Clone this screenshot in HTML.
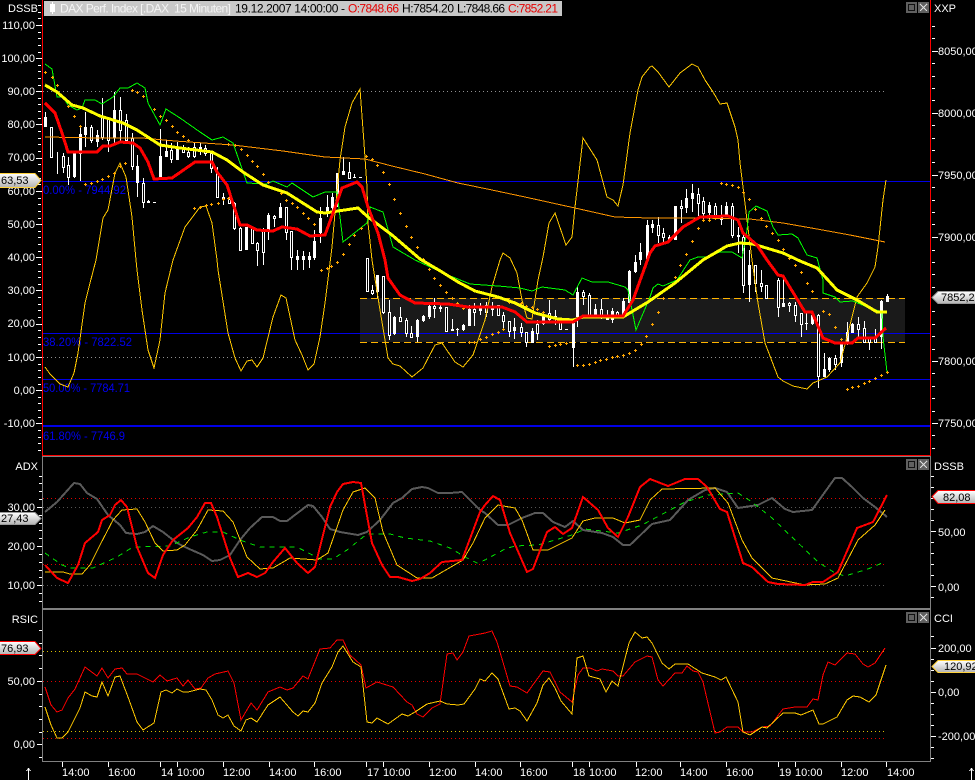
<!DOCTYPE html>
<html><head><meta charset="utf-8"><title>DAX chart</title>
<style>
html,body{margin:0;padding:0;background:#000;overflow:hidden}
svg{display:block}
text{font-family:"Liberation Sans",sans-serif;font-size:11px;fill:#fff}
.n{fill:none}
.t{stroke-linejoin:miter}
</style></head><body>
<svg width="975" height="780" viewBox="0 0 975 780" xmlns="http://www.w3.org/2000/svg">
<defs>
<marker id="d" markerWidth="5" markerHeight="5" refX="2" refY="2" markerUnits="userSpaceOnUse"><path d="M1 2.500h3M2.500 1v3" stroke="#ffa500" stroke-width="1" shape-rendering="crispEdges"/></marker>
<linearGradient id="g" x1="0" y1="0" x2="0" y2="1"><stop offset="0" stop-color="#fff"/><stop offset="1" stop-color="#b4b4b4"/></linearGradient>
</defs>
<rect width="975" height="780" fill="#000"/>

<g shape-rendering="crispEdges">
<!-- box -->
<rect x="360" y="298" width="545" height="44" fill="#1a1a1a"/>
<path d="M360 298.500H905M360 342.500H905" stroke="#ffb400" stroke-dasharray="7 4" fill="none"/>
<!-- dotted -->
<path d="M43 91.500H887M43 357.500H887" stroke="#909090" stroke-dasharray="1 3" fill="none"/>
<!-- blue -->
<path d="M43 181.500H930M43 333.500H930M43 379.500H930" stroke="#0000e6" fill="none"/>
<rect x="43" y="425" width="887" height="2" fill="#0000e6"/>
</g>
<g>
<text x="43" y="194" textLength="83" lengthAdjust="spacingAndGlyphs" style="fill:#0000f0;font-size:12px">0.00% - 7944.92</text>
<text x="43" y="346" textLength="89" lengthAdjust="spacingAndGlyphs" style="fill:#0000f0;font-size:12px">38.20% - 7822.52</text>
<text x="43" y="392" textLength="87" lengthAdjust="spacingAndGlyphs" style="fill:#0000f0;font-size:12px">50.00% - 7784.71</text>
<text x="43" y="440" textLength="82" lengthAdjust="spacingAndGlyphs" style="fill:#0000f0;font-size:12px">61.80% - 7746.9</text>
</g>

<g shape-rendering="crispEdges" fill="none">
<!-- wicks -->
<path transform="translate(.5 0)" stroke="#fff" d="M45 112V127M51 127V157M57 152V174M63 153V173M68 157V185M74 153V178M80 125V181M85 112V147M91 125V143M97 130V147M102 98V140M108 117V152M114 92V143M120 97V143M126 114V142M132 133V170M137 155V197M143 178V208M148 200V203M160 129V177M166 140V157M171 143V163M177 142V160M183 145V153M188 147V158M194 143V158M200 143V155M205 145V156M211 153V173M217 167V198M223 193V205M229 193V203M234 202V230M240 227V250M246 227V250M252 227V243M257 242V266M263 228V265M268 213V240M274 215V227M280 203V218M286 207V240M291 231V270M297 250V270M303 251V270M309 252V268M314 230V260M320 207V243M327 195V217M332 193V217M337 173V207M343 157V175M349 162V178M354 174V178M372 285V295M377 275V298M383 276V314M389 300V340M394 316V335M400 307V322M406 318V337M411 326V338M417 319V342M423 315V322M429 305V319M434 298V318M440 305V312M446 307V331M452 319V331M457 328V336M463 324V331M469 305V326M474 303V326M480 303V315M486 302V317M492 302V316M498 305V316M503 312V328M509 321V337M514 318V339M521 323V337M526 332V347M532 328V343M537 320V340M543 312V325M549 300V322M555 310V325M560 320V330M573 319V367M577 287V327M583 290V305M589 293V318M595 304V318M601 299V319M607 310V320M612 308V323M617 311V318M623 298V317M629 270V303M635 255V273M640 243V265M647 220V262M652 220V233M658 217V243M663 228V243M669 235V242M675 206V240M681 200V223M686 189V213M692 184V212M698 188V216M703 197V222M709 202V220M715 203V220M721 205V225M726 202V217M732 203V238M738 227V253M743 235V293M749 250V302M755 265V292M761 270V292M766 285V298M778 278V317M783 278V307M789 302V312M795 302V322M801 313V337M806 313V330M812 315V325M818 314V388M824 353V377M829 357V372M835 355V370M841 342V367M847 322V345M852 323V333M858 317V338M864 321V342M869 337V350M875 329V343M881 300V349M887 294V302"/>
<!-- hollow bodies -->
<path transform="translate(.5 .5)" stroke="#fff" fill="#000" d="M50 127h2v30h-2zM62 156h2v11h-2zM67 165h2v12h-2zM90 127h2v13h-2zM101 117h2v20h-2zM107 118h2v22h-2zM119 110h2v20h-2zM125 120h2v20h-2zM131 138h2v28h-2zM142 183h2v19h-2zM170 150h2v9h-2zM182 147h2v5h-2zM187 152h2v4h-2zM193 147h2v9h-2zM204 148h2v5h-2zM210 153h2v15h-2zM216 172h2v25h-2zM222 197h2v2h-2zM228 199h2v4h-2zM233 203h2v25h-2zM239 228h2v22h-2zM251 228h2v15h-2zM256 243h2v7h-2zM262 230h2v22h-2zM273 216h2v2h-2zM285 207h2v25h-2zM290 231h2v26h-2zM348 172h2v6h-2zM366 258h2v33h-2zM371 290h2v3h-2zM382 276h2v36h-2zM388 312h2v23h-2zM399 317h2v4h-2zM405 320h2v13h-2zM410 333h2v4h-2zM433 306h2v2h-2zM445 307h2v24h-2zM473 309h2v3h-2zM485 305h2v7h-2zM497 305h2v10h-2zM502 315h2v6h-2zM508 321h2v10h-2zM520 327h2v5h-2zM525 332h2v10h-2zM536 324h2v9h-2zM548 313h2v6h-2zM559 320h2v9h-2zM582 292h2v4h-2zM588 295h2v21h-2zM600 309h2v8h-2zM616 312h2v5h-2zM657 225h2v10h-2zM662 233h2v4h-2zM680 206h2v2h-2zM697 194h2v9h-2zM702 201h2v12h-2zM714 206h2v11h-2zM731 206h2v29h-2zM742 237h2v48h-2zM754 265h2v18h-2zM760 283h2v3h-2zM765 285h2v13h-2zM777 280h2v27h-2zM788 303h2v2h-2zM794 305h2v10h-2zM800 313h2v11h-2zM817 315h2v61h-2zM834 358h2v6h-2zM857 324h2v5h-2zM863 328h2v14h-2zM868 338h2v4h-2zM874 338h2v4h-2z"/>
<!-- filled bodies -->
<path fill="#fff" d="M44 117h3v10h-3zM73 153h3v24h-3zM79 134h3v20h-3zM84 127h3v8h-3zM96 135h3v7h-3zM113 110h3v28h-3zM136 166h3v17h-3zM147 201h3v2h-3zM153 202h3v1h-3zM159 156h3v21h-3zM165 151h3v6h-3zM176 147h3v13h-3zM199 147h3v2h-3zM245 227h3v23h-3zM267 215h3v15h-3zM279 207h3v11h-3zM296 256h3v4h-3zM302 256h3v4h-3zM308 256h3v4h-3zM313 241h3v17h-3zM319 218h3v15h-3zM326 207h3v6h-3zM331 197h3v11h-3zM336 173h3v27h-3zM342 171h3v4h-3zM353 177h3v1h-3zM359 177h3v1h-3zM376 275h3v17h-3zM393 317h3v17h-3zM416 320h3v17h-3zM422 316h3v5h-3zM428 306h3v11h-3zM439 307h3v2h-3zM451 329h3v2h-3zM456 329h3v1h-3zM462 325h3v5h-3zM468 309h3v17h-3zM479 307h3v4h-3zM491 306h3v4h-3zM513 327h3v4h-3zM531 331h3v12h-3zM542 315h3v9h-3zM554 316h3v2h-3zM565 329h3v1h-3zM572 323h3v25h-3zM576 292h3v25h-3zM594 309h3v7h-3zM606 318h3v2h-3zM611 311h3v9h-3zM622 301h3v15h-3zM628 271h3v32h-3zM634 262h3v10h-3zM639 252h3v8h-3zM646 225h3v35h-3zM651 224h3v4h-3zM668 237h3v3h-3zM674 206h3v34h-3zM685 198h3v10h-3zM691 193h3v6h-3zM708 205h3v8h-3zM720 215h3v5h-3zM725 206h3v9h-3zM737 235h3v2h-3zM748 265h3v20h-3zM782 303h3v4h-3zM805 323h3v1h-3zM811 315h3v9h-3zM823 369h3v8h-3zM828 358h3v12h-3zM840 343h3v20h-3zM846 332h3v10h-3zM851 324h3v9h-3zM880 301h3v36h-3zM886 296h3v6h-3z"/>

<!-- thin yellow -->
<polyline stroke="#ffc800" points="45,367 50,374 60,384 68,387 74,373 78,353 85,303 90,283 96,260 103,218 108,210 115,173 120,163 126,177 132,217 136,260 137,270 142,310 148,350 154,368 160,340 165,293 173,260 185,227 200,207 206,206 212,223 217,260 218,270 228,333 235,358 241,371 247,361 252,360 257,367 263,358 273,317 281,295 286,298 295,340 302,355 308,370 314,364 320,337 325,303 332,247 335,213 340,160 345,127 352,103 360,89 364,143 367,187 368,223 372,260 380,310 388,358 393,364 400,366 412,377 423,368 435,345 442,343 455,362 463,367 473,355 485,320 492,287 500,260 503,253 510,258 517,273 522,300 527,318 532,319 538,280 543,257 549,223 555,213 566,245 572,237 575,207 583,138 597,160 607,197 613,200 618,206 623,185 630,133 638,90 642,77 650,67 652,66 658,72 669,87 680,73 692,64 698,67 705,80 713,92 720,104 727,103 735,127 738,140 740,163 743,187 747,220 752,260 758,303 765,343 778,377 783,381 793,386 807,389 813,383 827,377 840,363 847,337 857,297 867,283 875,267 878,247 883,200 886,180"/>
<!-- long orange -->
<polyline stroke="#ff9600" points="45,137 100,138 142,138 175,141 233,145 283,151 325,157 365,159 392,166 425,174 458,183 492,190 525,197 575,208 615,217 650,218 700,218 750,219 783,223 817,229 850,235 885,242"/>
<!-- green -->
<polyline stroke="#00ff00" points="45,64 52,69 57,97 63,97 68,105 77,110 82,108 85,100 95,100 102,104 113,97 120,88 128,88 137,83 145,88 148,103 160,125 166,109 180,118 200,132 212,140 223,137 233,143 247,183 267,184 273,181 287,187 292,183 313,197 325,192 337,192 343,242 367,223 370,207 383,212 393,247 415,260 448,275 470,284 498,286 520,288 532,291 542,287 565,290 573,295 582,278 592,282 608,282 625,287 628,290 636,330 650,297 653,288 658,284 663,286 677,280 690,260 698,257 707,257 720,252 732,252 742,258 747,230 749,212 756,206 767,211 773,227 778,235 792,234 798,238 807,255 817,258 823,280 823,293 835,297 840,302 853,301 867,307 882,312 883,337 887,372"/>
</g>
<!-- plus dots -->
<g fill="none" stroke="none" marker-start="url(#d)" marker-mid="url(#d)" marker-end="url(#d)">
<polyline points="45,72 52,77 57,85 68,106 74,116 80,126"/>
<polyline points="85,184 91,183 97,181 102,179 108,176 114,173 120,166 125,163"/>
<polyline points="132,90 137,92 143,96 154,109 160,116 166,120 172,126 177,132 183,136 188,140"/>
<polyline points="194,208 200,207 206,205 211,204 218,203 223,199 228,198"/>
<polyline points="228,144 235,145 241,149 247,155 252,161 257,166 263,174 268,182 281,193 286,200 292,203 297,207 303,213 308,218 314,224 321,270 327,268 331,266 337,262 343,254 349,244 354,235 361,228"/>
<polyline points="366,156 372,159 377,165 383,172 389,184 394,199 400,213 406,226 411,237 417,247 423,259 429,269 434,278 440,285 446,292 452,298 457,303 463,308"/>
<polyline points="469,342 474,342 480,339 486,337 492,334 498,332 503,329"/>
<polyline points="509,302 514,302 521,303 526,306 532,307 537,309 543,312"/>
<polyline points="549,346 555,345 560,344 566,343"/>
<polyline points="577,365 583,365 589,364 595,362 600,360 606,359 612,357 617,356 623,355 629,353 635,350 641,344 646,336 652,324 658,312 663,298 675,277 680,265 686,254 692,241 698,228 703,220 709,220 715,218"/>
<polyline points="721,183 726,184 732,185 738,187 743,192 749,199 755,209 761,218 766,226 772,233 778,240 783,249 789,258 795,265 801,272 807,283 812,291 823,311 829,314 835,327 841,339"/>
<polyline points="847,389 852,387 858,386 864,383 869,381 875,378 881,375 887,372"/>
</g>
<g shape-rendering="crispEdges" fill="none">
<!-- thick yellow -->
<polyline stroke="#ffff00" stroke-width="3" points="45,85 57,92 72,105 83,108 100,116 123,123 137,130 160,145 180,148 212,152 227,160 243,172 263,185 287,193 317,212 325,213 358,208 368,217 392,235 420,259 442,272 458,282 475,291 498,297 515,303 535,313 558,319 573,320 583,317 623,317 648,302 675,283 703,260 727,246 740,243 753,244 783,253 800,261 817,268 837,290 857,300 877,312 887,312"/>
<!-- thick red -->
<polyline stroke="#ff0000" stroke-width="3" points="45,103 55,113 62,133 68,152 97,152 103,146 110,146 120,142 133,143 140,148 148,162 154,179 172,178 195,162 212,162 217,172 227,185 240,225 247,225 257,230 273,231 282,227 297,229 310,236 325,235 333,213 342,188 357,182 362,187 368,207 378,233 385,260 388,278 400,295 415,303 448,304 468,307 502,307 515,312 527,322 573,322 583,316 623,316 633,300 650,253 655,246 668,242 683,227 700,217 728,216 738,220 743,233 757,245 767,260 778,275 783,276 805,312 812,312 823,338 835,343 852,343 858,338 875,338 886,328"/>

<!-- Pane 2 -->
<path d="M43 498.500H887M43 564.500H887" stroke="#e00000" stroke-dasharray="1 3"/>
<path d="M43 507.500H887M43 585.500H887" stroke="#555" stroke-dasharray="1 3"/>
<polyline stroke="#5a5a5a" stroke-width="2" points="45,512 57,502 74,483 80,484 87,493 97,499 108,515 120,525 126,533 137,534 145,532 153,526 163,532 177,543 187,548 203,555 212,561 220,560 230,555 240,540 250,528 262,517 273,517 280,521 287,521 308,505 313,506 322,517 330,529 340,532 358,535 367,532 380,520 393,503 402,498 412,489 422,487 428,488 438,493 450,493 462,492 480,510 485,513 498,525 508,525 522,518 535,513 543,513 553,522 565,527 573,521 583,530 602,533 613,537 623,545 630,545 652,524 670,520 688,500 705,490 715,488 727,492 738,508 758,505 772,498 785,509 793,512 812,510 835,478 842,478 852,487 863,498 875,507 887,517"/>
<polyline stroke="#00e000" stroke-dasharray="5 5" points="45,553 62,565 70,568 93,568 117,557 133,547 170,546 190,537 207,532 223,532 240,540 260,547 297,547 320,559 333,559 347,550 367,534 390,534 405,538 430,541 450,548 467,558 477,563 485,560 505,549 515,546 538,545 572,535 585,529 618,533 642,525 685,502 708,495 738,493 752,502 772,518 818,562 835,573 845,576 868,569 882,563"/>
<polyline stroke="#ffc800" points="45,572 63,572 70,574 82,574 90,565 100,545 113,520 122,510 137,509 145,522 155,543 163,551 177,550 185,545 197,530 208,510 223,511 233,522 247,557 260,569 273,568 290,558 317,560 328,553 343,510 353,492 365,488 375,498 383,532 397,565 417,578 432,578 463,560 473,543 485,518 498,505 515,508 522,520 533,550 548,550 572,538 583,521 595,518 613,518 625,523 640,520 650,500 662,489 715,488 728,503 742,540 752,558 772,578 805,585 825,584 838,578 858,540 875,525 885,510"/>
<polyline stroke="#ff0000" stroke-width="2" points="45,565 57,578 68,583 78,565 85,543 98,532 102,520 110,515 115,505 121,500 127,507 137,547 148,573 155,578 163,555 173,540 188,528 197,517 205,503 211,503 217,517 230,558 238,577 248,573 257,577 265,573 273,562 285,548 297,563 308,573 315,567 330,507 337,492 343,484 353,482 361,483 372,543 382,565 390,577 398,577 412,581 420,579 430,573 442,562 462,560 480,512 485,505 493,496 500,500 510,533 527,572 533,569 547,532 555,527 563,534 572,528 583,497 598,510 608,528 618,537 628,517 640,487 650,479 668,486 685,479 698,479 707,487 720,509 727,512 743,563 752,567 768,582 778,584 805,585 813,582 823,582 838,572 857,528 873,522 887,495"/>

<!-- Pane 3 -->
<path d="M43 651.500H887M43 731.500H887" stroke="#d8c000" stroke-dasharray="1 3"/>
<path d="M43 681.500H887M43 738.500H887" stroke="#e00000" stroke-dasharray="1 3"/>
<polyline stroke="#ff0000" points="45,687 51,705 57,712 62,710 68,698 75,689 85,667 97,676 102,668 108,678 115,669 122,668 127,674 137,674 153,682 160,675 167,681 177,678 183,686 188,680 195,689 201,688 208,678 215,674 228,671 234,683 241,720 251,703 257,710 268,692 280,687 287,690 293,688 303,676 308,679 320,649 330,648 337,640 343,640 350,655 361,665 366,688 377,682 393,687 407,702 412,705 417,714 423,717 432,708 440,704 447,654 453,653 457,660 463,652 469,636 480,634 485,633 492,631 497,642 510,686 517,687 527,693 543,671 550,672 560,692 572,702 578,675 583,668 590,668 597,671 602,669 613,671 618,676 623,676 635,662 647,656 652,657 658,680 663,686 675,673 682,673 687,666 693,671 698,672 703,682 715,733 720,732 727,727 738,727 743,732 752,732 762,727 770,726 783,709 795,707 807,707 813,699 818,700 823,675 828,662 835,665 847,653 855,654 863,664 868,667 875,663 885,648"/>
<polyline stroke="#ffc800" points="45,707 51,725 57,738 62,738 68,732 80,708 85,692 92,696 97,697 102,682 108,696 115,677 120,676 128,697 137,722 143,730 154,723 161,692 166,690 172,693 177,689 183,692 188,692 200,689 206,690 212,700 218,715 223,718 228,715 234,726 241,731 246,720 251,718 257,722 268,705 280,697 293,712 298,716 303,711 308,712 315,703 322,683 332,667 338,652 343,646 353,662 361,667 367,722 372,723 377,718 388,724 402,714 408,716 415,712 427,704 440,701 447,704 458,705 464,704 475,689 480,679 485,681 492,673 498,679 509,709 515,708 520,711 527,721 537,703 543,685 549,678 555,688 561,701 572,714 577,658 583,656 589,676 600,679 606,692 612,681 618,686 629,643 635,632 642,638 647,637 652,643 662,663 669,669 675,664 688,664 702,673 715,677 721,680 726,677 738,702 743,732 750,735 762,727 767,728 783,713 795,713 801,715 813,710 819,724 823,724 837,717 847,700 853,696 860,697 869,702 876,695 886,665"/>

<!-- frame -->
<rect x="42" y="456" width="889" height="1" fill="#808080" stroke="none"/>
<rect x="42" y="608" width="889" height="2" fill="#808080" stroke="none"/>
<rect x="42" y="761" width="889" height="1" fill="#808080" stroke="none"/>
<rect x="42" y="456" width="1" height="306" fill="#808080" stroke="none"/>
<rect x="930" y="456" width="1" height="306" fill="#808080" stroke="none"/>
<rect x="42" y="0" width="1" height="456" fill="#ff0000" stroke="none"/>
<rect x="930" y="0" width="1" height="456" fill="#ff0000" stroke="none"/>
<rect x="42" y="455" width="889" height="1" fill="#ff0000" stroke="none"/>

<!-- ticks -->
<path stroke="#fff" d="M36 25.500h6M36 58.500h6M36 91.500h6M36 124.500h6M36 158.500h6M36 191.500h6M36 224.500h6M36 257.500h6M36 290.500h6M36 324.500h6M36 357.500h6M36 390.500h6M36 423.500h6
M38 5.500h3M38 12.500h3M38 18.500h3M38 32.500h3M38 38.500h3M38 45.500h3M38 52.500h3M38 65.500h3M38 71.500h3M38 78.500h3M38 85.500h3M38 98.500h3M38 104.500h3M38 111.500h3M38 118.500h3M38 131.500h3M38 138.500h3M38 144.500h3M38 151.500h3M38 164.500h3M38 171.500h3M38 178.500h3M38 184.500h3M38 198.500h3M38 204.500h3M38 211.500h3M38 218.500h3M38 231.500h3M38 237.500h3M38 244.500h3M38 251.500h3M38 264.500h3M38 271.500h3M38 277.500h3M38 284.500h3M38 297.500h3M38 304.500h3M38 310.500h3M38 317.500h3M38 330.500h3M38 337.500h3M38 344.500h3M38 350.500h3M38 364.500h3M38 370.500h3M38 377.500h3M38 384.500h3M38 397.500h3M38 403.500h3M38 410.500h3M38 417.500h3M38 430.500h3M38 437.500h3M38 443.500h3M38 450.500h3
M37 507.500h5M37 546.500h5M37 585.500h5M39 476.500h3M39 483.500h3M39 491.500h3M39 499.500h3M39 515.500h3M39 523.500h3M39 530.500h3M39 538.500h3M39 554.500h3M39 562.500h3M39 570.500h3M39 577.500h3M39 593.500h3M39 601.500h3
M37 681.500h5M37 744.500h5M39 630.500h3M39 643.500h3M39 655.500h3M39 668.500h3M39 694.500h3M39 706.500h3M39 719.500h3M39 732.500h3M39 757.500h3
M932 51.500h6M932 113.500h6M932 175.500h6M932 237.500h6M932 361.500h6M932 423.500h6
M932 26.500h3M932 38.500h3M932 63.500h3M932 76.500h3M932 88.500h3M932 100.500h3M932 125.500h3M932 138.500h3M932 150.500h3M932 162.500h3M932 187.500h3M932 200.500h3M932 212.500h3M932 224.500h3M932 250.500h3M932 262.500h3M932 274.500h3M932 287.500h3M932 311.500h3M932 324.500h3M932 336.500h3M932 349.500h3M932 373.500h3M932 386.500h3M932 398.500h3M932 411.500h3M932 435.500h3M932 448.500h3
M931 531.500h5M931 586.500h5M931 476.500h3M931 487.500h3M931 498.500h3M931 509.500h3M931 520.500h3M931 542.500h3M931 553.500h3M931 564.500h3M931 575.500h3M931 597.500h3
M931 648.500h5M931 692.500h5M931 736.500h5M931 636.500h3M931 659.500h3M931 670.500h3M931 681.500h3M931 703.500h3M931 714.500h3M931 725.500h3M931 747.500h3M931 758.500h3
M62.500 762v5M108.500 762v5M160.500 762v5M177.500 762v5M223.500 762v5M269.500 762v5M314.500 762v5M366.500 762v5M383.500 762v5M429.500 762v5M475.500 762v5M520.500 762v5M572.500 762v5M589.500 762v5M636.500 762v5M680.500 762v5M726.500 762v5M778.500 762v5M795.500 762v5M841.500 762v5M886.500 762v5"/>
</g>

<!-- title bar -->
<rect x="44" y="1" width="518" height="15" fill="#c8c8c8"/>
<path d="M52.500 2v12" stroke="#fff" fill="none" shape-rendering="crispEdges"/>
<rect x="50" y="4" width="5" height="8" fill="#fff"/>
<text x="60" y="12.500" textLength="171" lengthAdjust="spacing" xml:space="preserve" style="fill:#f4f4f4;font-size:12px">DAX Perf. Index [.DAX  15 Minuten]</text>
<text x="235" y="12.500" textLength="110" lengthAdjust="spacing" style="fill:#000;font-size:12px">19.12.2007 14:00:00 -</text>
<text x="348" y="12.500" textLength="51" lengthAdjust="spacing" style="fill:#e60000;font-size:12px">O:7848.66</text>
<text x="402" y="12.500" textLength="52" lengthAdjust="spacing" style="fill:#000;font-size:12px">H:7854.20</text>
<text x="457" y="12.500" textLength="48" lengthAdjust="spacing" style="fill:#000;font-size:12px">L:7848.66</text>
<text x="508" y="12.500" textLength="50" lengthAdjust="spacing" style="fill:#e60000;font-size:12px">C:7852.21</text>

<!-- window buttons -->
<g shape-rendering="crispEdges">
<rect x="906" y="2" width="11" height="11" fill="#606060"/><rect x="908.500" y="4.500" width="6" height="6" fill="none" stroke="#111"/>
<rect x="918" y="2" width="11" height="11" fill="#606060"/><path d="M920 4l7 7M927 4l-7 7" stroke="#ddd" fill="none"/>
<rect x="906" y="459" width="11" height="11" fill="#606060"/><rect x="908.500" y="461.500" width="6" height="6" fill="none" stroke="#111"/>
<rect x="918" y="459" width="11" height="11" fill="#606060"/><path d="M920 461l7 7M927 461l-7 7" stroke="#ddd" fill="none"/>
<rect x="906" y="612" width="11" height="11" fill="#606060"/><rect x="908.500" y="614.500" width="6" height="6" fill="none" stroke="#111"/>
<rect x="918" y="612" width="11" height="11" fill="#606060"/><path d="M920 614l7 7M927 614l-7 7" stroke="#ddd" fill="none"/>
</g>

<!-- left labels -->
<g text-anchor="end">
<text x="38" y="12">DSSB</text>
<text x="35" y="29">110,00</text><text x="35" y="62">100,00</text><text x="35" y="95">90,00</text><text x="35" y="128">80,00</text><text x="35" y="161">70,00</text><text x="35" y="195">60,00</text><text x="35" y="228">50,00</text><text x="35" y="261">40,00</text><text x="35" y="294">30,00</text><text x="35" y="327">20,00</text><text x="35" y="361">10,00</text><text x="35" y="394">0,00</text><text x="35" y="427">-10,00</text>
<text x="38" y="470">ADX</text>
<text x="35" y="511">30,00</text><text x="35" y="550">20,00</text><text x="35" y="589">10,00</text>
<text x="38" y="623">RSIC</text>
<text x="35" y="685">50,00</text><text x="35" y="748">0,00</text>
</g>
<!-- right labels -->
<text x="934" y="12">XXP</text>
<text x="938" y="55">8050,00</text><text x="938" y="117">8000,00</text><text x="938" y="179">7950,00</text><text x="938" y="241">7900,00</text><text x="938" y="365">7800,00</text><text x="938" y="427">7750,00</text>
<text x="934" y="470">DSSB</text>
<text x="938" y="536">50,00</text><text x="938" y="591">0,00</text>
<text x="934" y="622">CCI</text>
<text x="938" y="652">200,00</text><text x="938" y="696">0,00</text><text x="938" y="740">-200,00</text>

<!-- tags -->
<path d="M-1 173.500H35L41 180.500L35 187.500H-1Z" fill="url(#g)" stroke="#ffd23c"/>
<text x="1" y="184" style="fill:#000">63,53</text>
<path d="M-1 512.500H35L41 518.500L35 524.500H-1Z" fill="url(#g)" stroke="#999"/>
<text x="1" y="522" style="fill:#000">27,43</text>
<path d="M-1 641.500H35L41 648.500L35 654.500H-1Z" fill="url(#g)" stroke="#ff0000"/>
<text x="1" y="652" style="fill:#000">76,93</text>
<path d="M976 291.500H938L932 297.500L938 303.500H976Z" fill="url(#g)" stroke="#999"/>
<text x="941" y="301" style="fill:#000">7852,2</text>
<path d="M976 490.500H938L932 496.500L938 503.500H976Z" fill="url(#g)" stroke="#ff0000"/>
<text x="943" y="501" style="fill:#000">82,08</text>
<path d="M976 660.500H938L932 666.500L938 672.500H976Z" fill="url(#g)" stroke="#ffd23c"/>
<text x="944" y="670" style="fill:#000">120,92</text>

<!-- x labels -->
<text x="62" y="776">14:00</text><text x="108" y="776">16:00</text><text x="161" y="776">14</text><text x="177" y="776">10:00</text><text x="223" y="776">12:00</text><text x="269" y="776">14:00</text><text x="314" y="776">16:00</text><text x="367" y="776">17</text><text x="383" y="776">10:00</text><text x="429" y="776">12:00</text><text x="475" y="776">14:00</text><text x="520" y="776">16:00</text><text x="573" y="776">18</text><text x="589" y="776">10:00</text><text x="635" y="776">12:00</text><text x="680" y="776">14:00</text><text x="726" y="776">16:00</text><text x="779" y="776">19</text><text x="795" y="776">10:00</text><text x="841" y="776">12:00</text><text x="887" y="776">14:00</text>

<!-- arrows -->
<path d="M28.500 769V780M26.500 771L28.500 768.500L30.500 771M971.500 769V780M969.500 771L971.500 768.500L973.500 771" stroke="#fff" fill="none" shape-rendering="crispEdges"/>
</svg>
</body></html>
